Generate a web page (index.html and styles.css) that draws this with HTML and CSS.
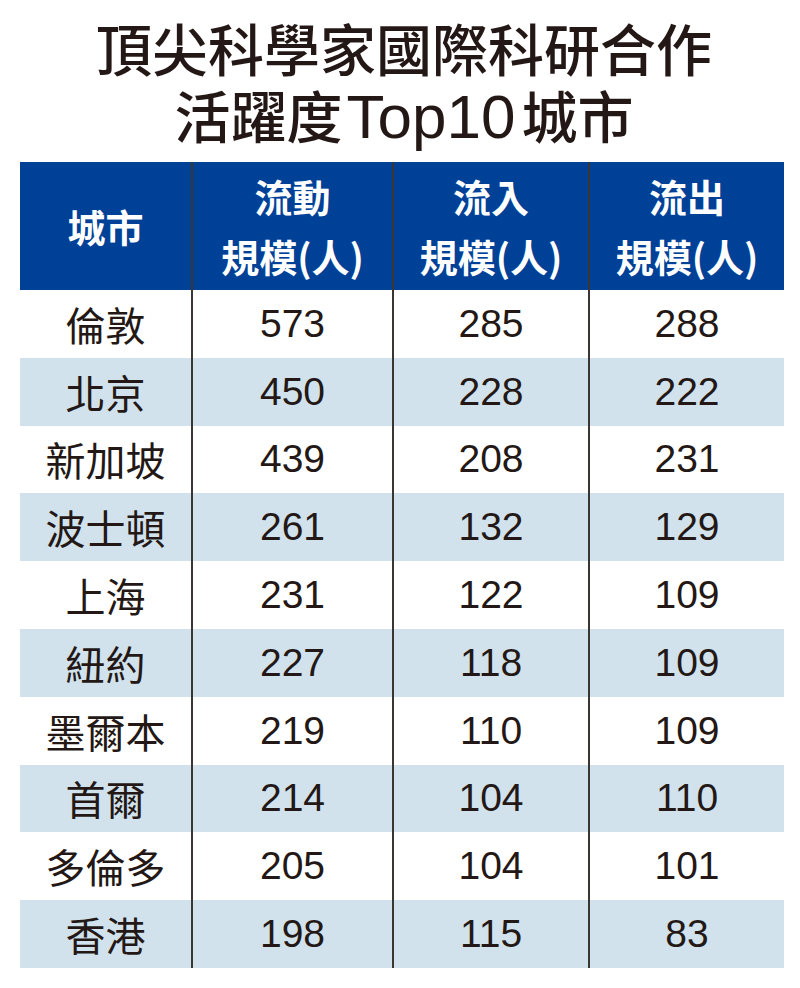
FILE: index.html
```html
<!DOCTYPE html>
<html lang="zh-Hant">
<head>
<meta charset="utf-8">
<title>頂尖科學家國際科研合作活躍度Top10城市</title>
<link rel="stylesheet" href="styles.css">
</head>
<body>
<div class="page">
  <h1 class="title">
    <span class="line">頂尖科學家國際科研合作</span>
    <span class="line">活躍度<span class="latin">Top10</span>城市</span>
  </h1>
  <div class="table">
    <div class="cell head first">城市</div>
    <div class="cell head">流動<br>規模(人)</div>
    <div class="cell head">流入<br>規模(人)</div>
    <div class="cell head">流出<br>規模(人)</div>

    <div class="cell city">倫敦</div><div class="cell num">573</div><div class="cell num">285</div><div class="cell num">288</div>
    <div class="cell city alt">北京</div><div class="cell num alt">450</div><div class="cell num alt">228</div><div class="cell num alt">222</div>
    <div class="cell city">新加坡</div><div class="cell num">439</div><div class="cell num">208</div><div class="cell num">231</div>
    <div class="cell city alt">波士頓</div><div class="cell num alt">261</div><div class="cell num alt">132</div><div class="cell num alt">129</div>
    <div class="cell city">上海</div><div class="cell num">231</div><div class="cell num">122</div><div class="cell num">109</div>
    <div class="cell city alt">紐約</div><div class="cell num alt">227</div><div class="cell num alt">118</div><div class="cell num alt">109</div>
    <div class="cell city">墨爾本</div><div class="cell num">219</div><div class="cell num">110</div><div class="cell num">109</div>
    <div class="cell city alt">首爾</div><div class="cell num alt">214</div><div class="cell num alt">104</div><div class="cell num alt">110</div>
    <div class="cell city">多倫多</div><div class="cell num">205</div><div class="cell num">104</div><div class="cell num">101</div>
    <div class="cell city alt">香港</div><div class="cell num alt">198</div><div class="cell num alt">115</div><div class="cell num alt">83</div>
  </div>
</div>
</body>
</html>
```
FILE: styles.css
```css
html, body {
  margin: 0;
  padding: 0;
  background: #ffffff;
}
.page {
  width: 800px;
  padding-top: 13px;
  color: #231815;
  font-family: "Noto Sans CJK TC", "Noto Sans CJK SC", sans-serif;
}
.title {
  margin: 0 0 15px 0;
  padding-left: 8px;
  text-align: center;
  font-size: 56px;
  font-weight: 500;
  letter-spacing: 0;
}
.title .line {
  display: block;
  height: 67px;
  line-height: 67px;
}
.title .latin {
  font-family: "Liberation Sans", sans-serif;
  font-weight: 400;
  font-size: 62px;
  margin: 0 6px 0 4px;
}
.table {
  margin-left: 20px;
  width: 764px;
  display: grid;
  grid-template-columns: 171px 201px 196px 196px;
  grid-template-rows: 128px repeat(10, 67.8px);
}
.cell {
  display: flex;
  align-items: center;
  justify-content: center;
  text-align: center;
  border-left: 2px solid #3a3634;
  box-sizing: border-box;
}
.cell.first,
.cell.city {
  border-left: none;
}
.head {
  background: #004198;
  color: #ffffff;
  font-weight: 700;
  font-size: 38px;
  line-height: 60px;
}
.city {
  font-size: 40px;
  font-weight: 400;
}
.num {
  font-family: "Liberation Sans", sans-serif;
  font-size: 39px;
}
.alt {
  background: #d1e2ed;
}
```
